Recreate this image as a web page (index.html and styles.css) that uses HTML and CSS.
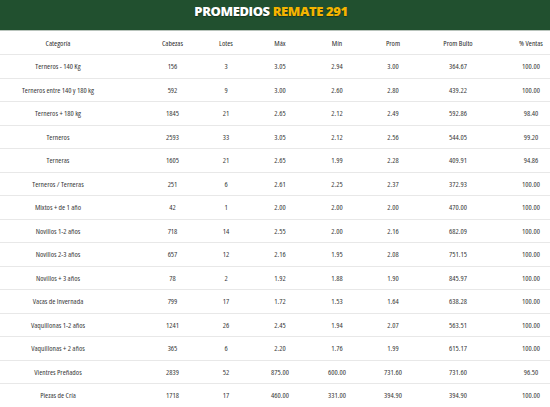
FILE: index.html
```html
<!DOCTYPE html>
<html lang="es">
<head>
<meta charset="utf-8">
<title>Promedios Remate 291</title>
<link rel="stylesheet" href="styles.css">
</head>
<body>
<div class="page">
  <header class="banner">
    <h1 class="title">PROMEDIOS <span class="accent">REMATE 291</span></h1>
  </header>
  <table class="stats">
    <colgroup>
      <col class="w-cat"><col class="w-a"><col class="w-a"><col class="w-b"><col class="w-c"><col class="w-d"><col class="w-e"><col class="w-f">
    </colgroup>
    <thead>
      <tr><th class="cat">Categoría</th><th>Cabezas</th><th>Lotes</th><th>Máx</th><th>Mín</th><th>Prom</th><th>Prom Bulto</th><th>% Ventas</th></tr>
    </thead>
    <tbody>
      <tr><td class="cat">Terneros - 140 Kg</td><td>156</td><td>3</td><td>3.05</td><td>2.94</td><td>3.00</td><td>364.67</td><td>100.00</td></tr>
      <tr><td class="cat">Terneros entre 140 y 180 kg</td><td>592</td><td>9</td><td>3.00</td><td>2.60</td><td>2.80</td><td>439.22</td><td>100.00</td></tr>
      <tr><td class="cat">Terneros + 180 kg</td><td>1845</td><td>21</td><td>2.65</td><td>2.12</td><td>2.49</td><td>592.86</td><td>98.40</td></tr>
      <tr><td class="cat">Terneros</td><td>2593</td><td>33</td><td>3.05</td><td>2.12</td><td>2.56</td><td>544.05</td><td>99.20</td></tr>
      <tr><td class="cat">Terneras</td><td>1605</td><td>21</td><td>2.65</td><td>1.99</td><td>2.28</td><td>409.91</td><td>94.86</td></tr>
      <tr><td class="cat">Terneros / Terneras</td><td>251</td><td>6</td><td>2.61</td><td>2.25</td><td>2.37</td><td>372.93</td><td>100.00</td></tr>
      <tr><td class="cat">Mixtos + de 1 año</td><td>42</td><td>1</td><td>2.00</td><td>2.00</td><td>2.00</td><td>470.00</td><td>100.00</td></tr>
      <tr><td class="cat">Novillos 1-2 años</td><td>718</td><td>14</td><td>2.55</td><td>2.00</td><td>2.16</td><td>682.09</td><td>100.00</td></tr>
      <tr><td class="cat">Novillos 2-3 años</td><td>657</td><td>12</td><td>2.16</td><td>1.95</td><td>2.08</td><td>751.15</td><td>100.00</td></tr>
      <tr><td class="cat">Novillos + 3 años</td><td>78</td><td>2</td><td>1.92</td><td>1.88</td><td>1.90</td><td>845.97</td><td>100.00</td></tr>
      <tr><td class="cat">Vacas de Invernada</td><td>799</td><td>17</td><td>1.72</td><td>1.53</td><td>1.64</td><td>638.28</td><td>100.00</td></tr>
      <tr><td class="cat">Vaquillonas 1-2 años</td><td>1241</td><td>26</td><td>2.45</td><td>1.94</td><td>2.07</td><td>563.51</td><td>100.00</td></tr>
      <tr><td class="cat">Vaquillonas + 2 años</td><td>365</td><td>6</td><td>2.20</td><td>1.76</td><td>1.99</td><td>615.17</td><td>100.00</td></tr>
      <tr><td class="cat">Vientres Preñados</td><td>2839</td><td>52</td><td>875.00</td><td>600.00</td><td>731.60</td><td>731.60</td><td>96.50</td></tr>
      <tr><td class="cat">Piezas de Cría</td><td>1718</td><td>17</td><td>460.00</td><td>331.00</td><td>394.90</td><td>394.90</td><td>100.00</td></tr>
    </tbody>
  </table>
</div>
</body>
</html>
```
FILE: styles.css
```css
html, body {
  margin: 0;
  padding: 0;
  background: #ffffff;
}
body {
  overflow: hidden;
  font-family: "Open Sans", "Liberation Sans", sans-serif;
  font-stretch: 75%;
}
.page {
  width: 550px;
  overflow: hidden;
}
.banner {
  height: 25px;
  padding-top: 5px;
  padding-right: 8px;
  background: #21502f;
  border-bottom: 1px solid #b9c4bc;
  display: flex;
  align-items: flex-start;
  justify-content: center;
}
.title {
  margin: 0;
  font-family: "Open Sans", "Liberation Sans", sans-serif;
  font-stretch: 100%;
  font-size: 13px;
  line-height: 13px;
  font-weight: 800;
  color: #ffffff;
  letter-spacing: -0.4px;
  text-shadow: 0 1px 1px rgba(0,0,0,0.35);
}
.accent {
  color: #f5b400;
}
.stats {
  border-collapse: collapse;
  table-layout: fixed;
  width: 565.25px;
  font-size: 7.6px;
  color: #383838;
}
.w-cat { width: 145.75px; }
.w-a { width: 53.5px; }
.w-b { width: 54.5px; }
.w-c { width: 59.5px; }
.w-d { width: 52.5px; }
.w-e { width: 77.5px; }
.w-f { width: 68.5px; }
.stats th,
.stats td {
  padding: 0;
  text-align: center;
  font-weight: normal;
  border-bottom: 1px solid #e8e8e8;
  white-space: nowrap;
}
.stats th {
  height: 23px;
  color: #2a2a2a;
}
.stats td {
  height: 22.5px;
}
.stats .cat {
  padding-right: 29.75px;
}
```
